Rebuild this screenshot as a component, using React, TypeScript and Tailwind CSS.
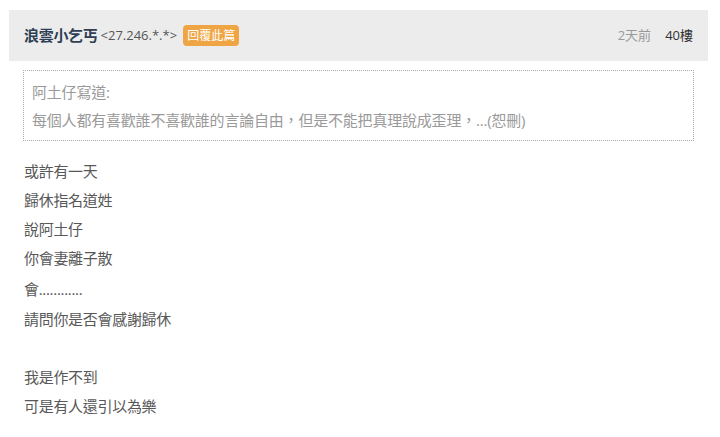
import React from "react";

const font = {
  fontFamily: '"Open Sans", "Noto Sans CJK TC", "Noto Sans", sans-serif',
};

export default function App() {
  const lines = [
    "或許有一天",
    "歸休指名道姓",
    "說阿土仔",
    "你會妻離子散",
  ];
  return (
    <div className="w-[720px] h-[437px] bg-white overflow-hidden pt-[10px]" style={font}>
      <div className="ml-[9px] w-[699px] h-[51px] bg-[#ececec] flex items-center pl-[15px] pr-[15px]">
        <span className="text-[15px] font-bold text-[#2f3f55] tracking-[-0.3px]">浪雲小乞丐</span>
        <span className="ml-[3px] text-[13px] text-[#555]">&lt;27.246.*.*&gt;</span>
        <span className="ml-[6px] h-[21px] px-[4px] rounded-[4px] bg-[#f0a544] text-white text-[12px] leading-[21px]">
          回覆此篇
        </span>
        <span className="ml-auto text-[13px] text-[#999]">2天前</span>
        <span className="ml-[14px] text-[13px] text-[#333]">40樓</span>
      </div>
      <div className="ml-[23px] mt-[9px] w-[671px] h-[71px] border border-dotted border-[#aaa] pl-[8px] pt-[7px] text-[15px] leading-[28px] text-[#9a9a9a] tracking-[-0.2px]">
        <div>阿土仔寫道:</div>
        <div>每個人都有喜歡誰不喜歡誰的言論自由，但是不能把真理說成歪理，...(恕刪)</div>
      </div>
      <div className="ml-[24px] mt-[16px] text-[15px] leading-[29px] text-[#585858] tracking-[-0.3px]">
        {lines.map((l) => (
          <div key={l}>{l}</div>
        ))}
        <div className="leading-[32px]">會............</div>
        <div>請問你是否會感謝歸休</div>
        <div>&nbsp;</div>
        <div>我是作不到</div>
        <div>可是有人還引以為樂</div>
      </div>
    </div>
  );
}
